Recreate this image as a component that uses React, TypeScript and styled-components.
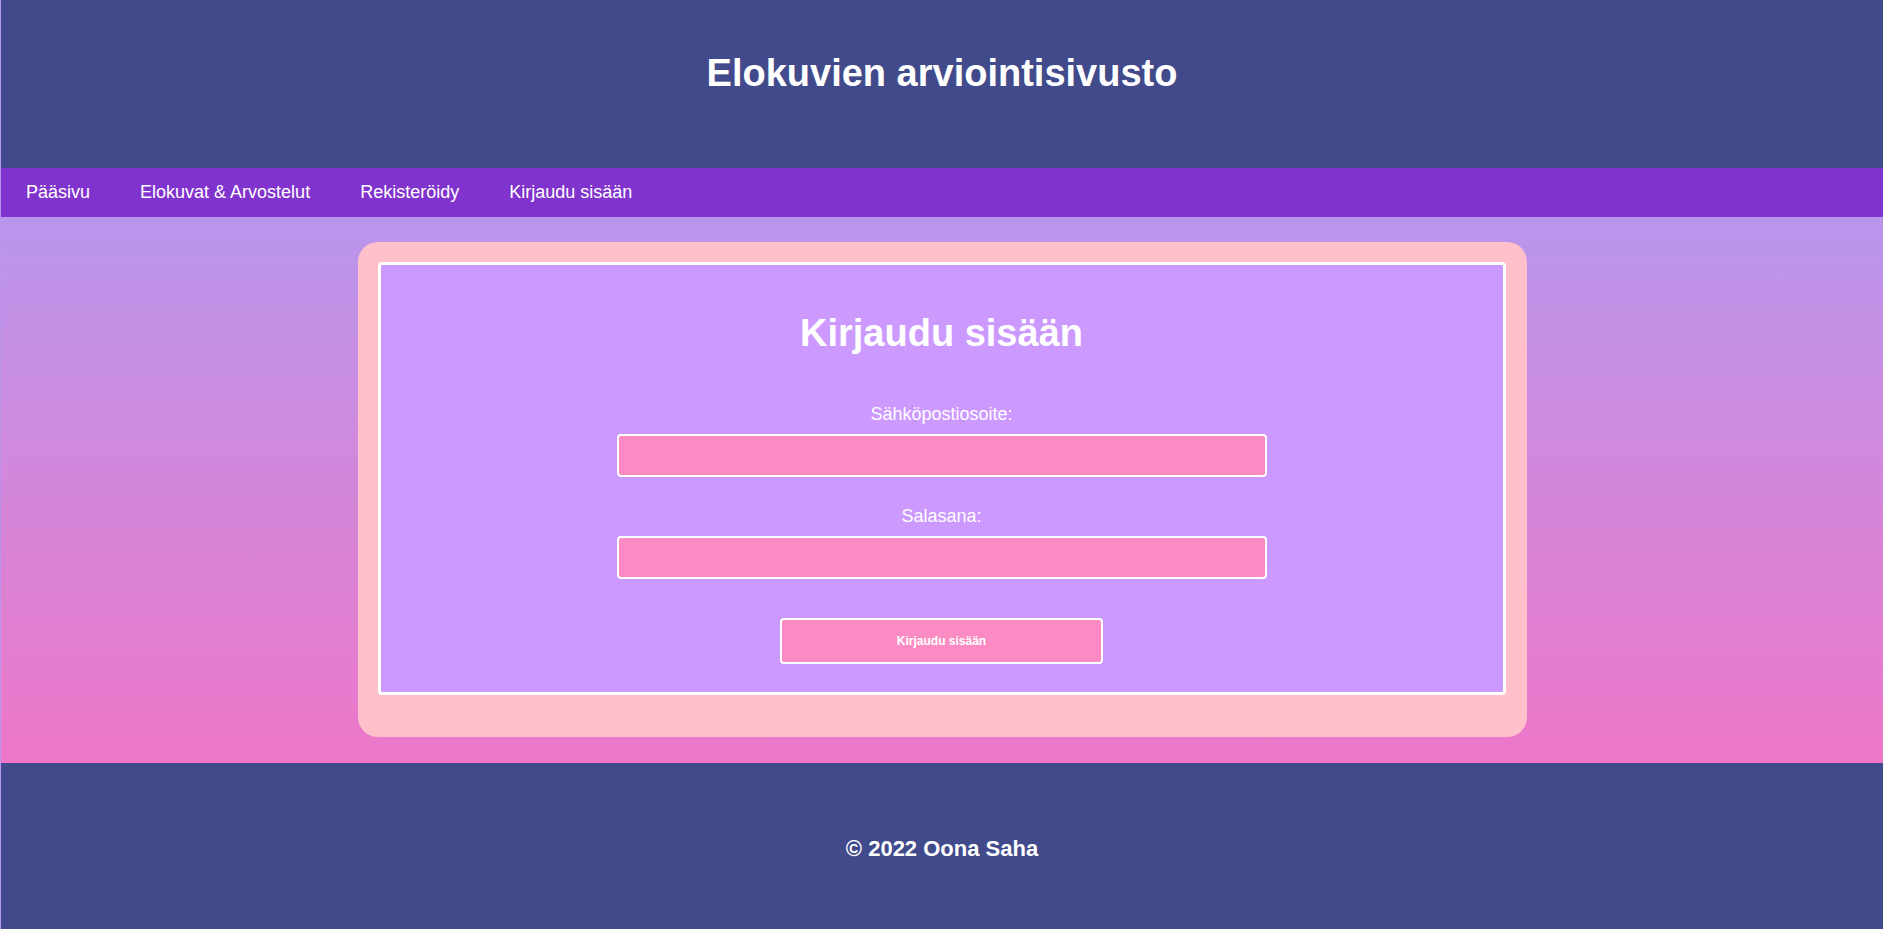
import React, { useState } from 'react';
import styled, { createGlobalStyle } from 'styled-components';

const GlobalStyle = createGlobalStyle`
  html, body {
    margin: 0;
    padding: 0;
    background: #b996ec;
    font-family: 'Liberation Sans', Arial, Helvetica, sans-serif;
  }
  * {
    box-sizing: border-box;
  }
`;

const Page = styled.div`
  margin-left: 1px;
  display: flex;
  flex-direction: column;
  min-height: 929px;
`;

const Header = styled.header`
  background: #414a8b;
  height: 168px;
  padding-top: 51px;
  text-align: center;
`;

const SiteTitle = styled.h1`
  margin: 0;
  color: #ffffff;
  font-size: 38px;
  line-height: 44px;
  font-weight: bold;
`;

const Nav = styled.nav`
  background: #8134cd;
  height: 49px;
  display: flex;
  align-items: center;
`;

const NavLink = styled.a`
  color: #ffffff;
  text-decoration: none;
  font-size: 18px;
  padding: 0 25px;
  line-height: 21px;
  cursor: pointer;

  &:hover {
    text-decoration: underline;
  }
`;

const Main = styled.main`
  flex: 1;
  background: linear-gradient(180deg, #b896ec 0%, #ee77c8 100%);
  padding: 25px 0 26px;
  display: flex;
  justify-content: center;
`;

const Card = styled.section`
  width: 1169px;
  background: #ffc0cb;
  border-radius: 20px;
  padding: 20px 21px 42px 20px;
`;

const FormBox = styled.form`
  background: #cc99ff;
  border: 3px solid #ffffff;
  border-radius: 4px;
  padding: 46px 0 28px;
  display: flex;
  flex-direction: column;
  align-items: center;
`;

const FormTitle = styled.h2`
  margin: 0 0 49px;
  color: #ffffff;
  font-size: 38px;
  line-height: 44px;
  font-weight: bold;
`;

const Field = styled.div<{ $last?: boolean }>`
  display: flex;
  flex-direction: column;
  align-items: center;
  margin-bottom: ${(p) => (p.$last ? '39px' : '29px')};
`;

const Label = styled.label`
  color: #ffffff;
  font-size: 18px;
  line-height: 21px;
  margin-bottom: 9px;
`;

const Input = styled.input`
  width: 650px;
  height: 43px;
  background: #fd8bc3;
  border: 2px solid #ffffff;
  border-radius: 4px;
  padding: 0 10px;
  color: #ffffff;
  font-size: 16px;
  font-family: inherit;
  outline: none;
`;

const SubmitButton = styled.button`
  width: 323px;
  height: 46px;
  background: #fd8bc3;
  border: 2px solid #ffffff;
  border-radius: 4px;
  color: #ffffff;
  font-size: 12px;
  font-weight: bold;
  font-family: inherit;
  cursor: pointer;
`;

const Footer = styled.footer`
  background: #414a8b;
  height: 167px;
  padding-top: 4px;
  display: flex;
  align-items: center;
  justify-content: center;
`;

const FooterText = styled.p`
  margin: 0;
  color: #ffffff;
  font-size: 22px;
  font-weight: bold;
`;

const links = ['Pääsivu', 'Elokuvat & Arvostelut', 'Rekisteröidy', 'Kirjaudu sisään'];

export default function App() {
  const [email, setEmail] = useState('');
  const [password, setPassword] = useState('');

  return (
    <>
      <GlobalStyle />
      <Page>
        <Header>
          <SiteTitle>Elokuvien arviointisivusto</SiteTitle>
        </Header>

        <Nav>
          {links.map((link) => (
            <NavLink key={link} href="#">
              {link}
            </NavLink>
          ))}
        </Nav>

        <Main>
          <Card>
            <FormBox onSubmit={(e) => e.preventDefault()}>
              <FormTitle>Kirjaudu sisään</FormTitle>

              <Field>
                <Label htmlFor="email">Sähköpostiosoite:</Label>
                <Input
                  id="email"
                  type="email"
                  value={email}
                  onChange={(e) => setEmail(e.target.value)}
                />
              </Field>

              <Field $last>
                <Label htmlFor="password">Salasana:</Label>
                <Input
                  id="password"
                  type="password"
                  value={password}
                  onChange={(e) => setPassword(e.target.value)}
                />
              </Field>

              <SubmitButton type="submit">Kirjaudu sisään</SubmitButton>
            </FormBox>
          </Card>
        </Main>

        <Footer>
          <FooterText>© 2022 Oona Saha</FooterText>
        </Footer>
      </Page>
    </>
  );
}
